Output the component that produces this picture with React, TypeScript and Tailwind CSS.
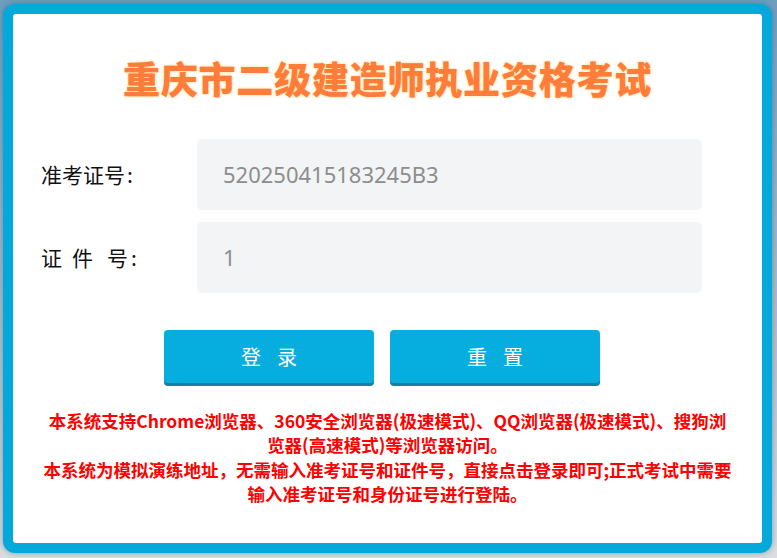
import React from "react";

const cjk = { fontFamily: '"Noto Sans CJK SC", "Noto Sans", sans-serif' };

function Row({ label, value }: { label: React.ReactNode; value: string }) {
  return (
    <div className="flex items-center">
      <div className="ml-[28px] flex w-[156px] items-center text-[21px] text-[#111]" style={cjk}>
        {label}
      </div>
      <div
        className="flex h-[71px] w-[505px] items-center rounded-[5px] bg-[#f3f4f6] pl-[26px] text-[22px] text-[#8d8d8d]"
        style={{ fontFamily: '"Noto Sans", "Open Sans", sans-serif' }}
      >
        {value}
      </div>
    </div>
  );
}

function Btn({ a, b }: { a: string; b: string }) {
  return (
    <button
      className="flex h-[53px] w-[210px] items-center justify-center gap-[16px] rounded-[4px] bg-[#06aee0] text-[20px] text-white shadow-[0_3px_0_#1a7ea3]"
      style={cjk}
    >
      <span>{a}</span>
      <span>{b}</span>
    </button>
  );
}

export default function App() {
  return (
    <div className="h-[558px] w-[777px] overflow-hidden bg-gradient-to-b from-[#6f9ebe] via-[#a9bccb] to-[#dcdfe1] pl-[3px] pt-[4px]">
      <div className="h-[549px] w-[769px] rounded-[12px] bg-[#04a9dc] p-[10px] shadow-[0_0_6px_rgba(40,90,120,0.5)]">
        <div className="flex h-full w-full flex-col rounded-[3px] bg-white">
          <h1
            className="mt-[43px] text-center text-[37px] font-black leading-[42px] tracking-[0.8px] text-[#ff7c3b] [text-shadow:0_0_3px_#ffd98c,0_0_1px_#ffd98c]"
            style={cjk}
          >
            重庆市二级建造师执业资格考试
          </h1>
          <div className="mt-[40px] flex flex-col gap-[12px]">
            <Row
              label={
                <>
                  <span>准考证号</span>
                  <span className="ml-[2px]">:</span>
                </>
              }
              value="520250415183245B3"
            />
            <Row
              label={
                <>
                  <span>证</span>
                  <span className="ml-[10px]">件</span>
                  <span className="ml-[14px]">号</span>
                  <span className="ml-[3px]">:</span>
                </>
              }
              value="1"
            />
          </div>
          <div className="ml-[151px] mt-[37px] flex gap-[16px]">
            <Btn a="登" b="录" />
            <Btn a="重" b="置" />
          </div>
          <div
            className="mt-[26px] text-center text-[17.5px] font-bold leading-[24.3px] text-[#ff0000]"
            style={cjk}
          >
            <div>本系统支持Chrome浏览器、360安全浏览器(极速模式)、QQ浏览器(极速模式)、搜狗浏</div>
            <div>览器(高速模式)等浏览器访问。</div>
            <div>本系统为模拟演练地址，无需输入准考证号和证件号，直接点击登录即可;正式考试中需要</div>
            <div>输入准考证号和身份证号进行登陆。</div>
          </div>
        </div>
      </div>
    </div>
  );
}
